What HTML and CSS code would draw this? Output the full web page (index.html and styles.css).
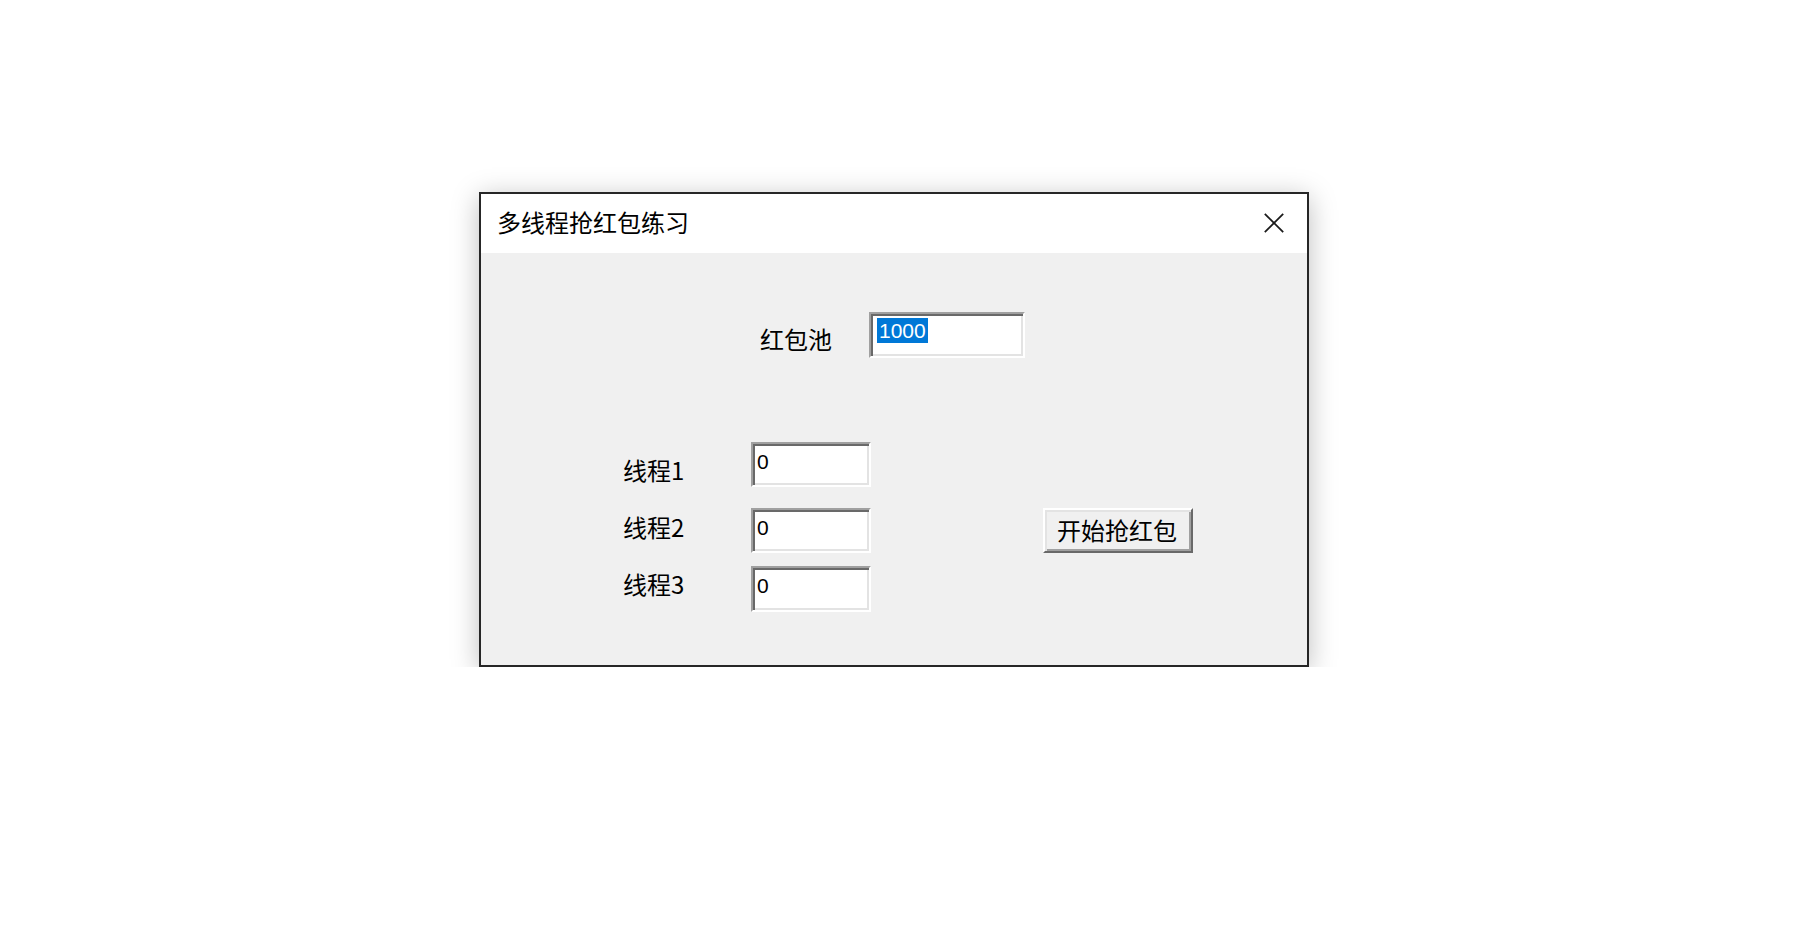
FILE: index.html
```html
<!DOCTYPE html>
<html lang="zh-CN">
<head>
<meta charset="utf-8">
<title>多线程抢红包练习</title>
<link rel="stylesheet" href="styles.css">
</head>
<body>
<div class="window">
  <div class="titlebar">
    <span class="title">多线程抢红包练习</span>
    <svg class="close" width="20" height="20" viewBox="0 0 20 20" aria-hidden="true">
      <line x1="0.8" y1="0.8" x2="19.2" y2="19.2"/>
      <line x1="19.2" y1="0.8" x2="0.8" y2="19.2"/>
    </svg>
  </div>
  <div class="content">
    <div class="pool-row">
      <span class="label pool-label">红包池</span>
      <div class="field pool-field"><span class="sel">1000</span></div>
    </div>
    <div class="threads">
      <div class="thread-col">
        <div class="thread-row">
          <span class="label tl1">线程1</span>
          <div class="field thread-field"><span class="val">0</span></div>
        </div>
        <div class="thread-row r2">
          <span class="label tl2">线程2</span>
          <div class="field thread-field"><span class="val">0</span></div>
        </div>
        <div class="thread-row r3">
          <span class="label tl3">线程3</span>
          <div class="field thread-field tall"><span class="val">0</span></div>
        </div>
      </div>
      <div class="button">开始抢红包</div>
    </div>
  </div>
</div>
</body>
</html>
```

FILE: styles.css
```css
html, body {
  margin: 0;
  background: #ffffff;
}
body {
  padding: 192px 0 0 479px;
  font-family: "Noto Sans CJK SC", "Noto Sans", sans-serif;
  color: #000;
}
.window {
  width: 830px;
  height: 475px;
  box-sizing: border-box;
  border: 2px solid #262626;
  background: #f0f0f0;
  box-shadow: 0 5px 26px rgba(0, 0, 0, 0.26);
  display: flex;
  flex-direction: column;
}
.titlebar {
  height: 59px;
  flex: none;
  background: #ffffff;
  display: flex;
  align-items: center;
  justify-content: space-between;
  padding: 0 23px 0 16px;
}
.title {
  font-size: 24px;
  line-height: 30px;
  margin-bottom: 4px;
  color: #000;
}
.close {
  display: block;
  margin-top: -2px;
}
.close line {
  stroke: #1a1a1a;
  stroke-width: 1.7;
}
.content {
  flex: 1;
  background: #f0f0f0;
  padding-top: 59px;
}
.pool-row {
  display: flex;
  align-items: flex-start;
  padding-left: 279px;
}
.label {
  font-size: 24px;
  line-height: 26px;
  white-space: nowrap;
}
.pool-label {
  width: 109px;
  margin-top: 14px;
}
.field {
  box-sizing: border-box;
  background: #ffffff;
  border: 2px solid;
  border-color: #a0a0a0 #ffffff #ffffff #a0a0a0;
  box-shadow: inset 2px 2px 0 #696969, inset -2px -2px 0 #e3e3e3;
  font-family: "Liberation Sans", Arial, sans-serif;
  font-size: 21px;
  line-height: 25px;
}
.pool-field {
  width: 156px;
  height: 46px;
  padding: 4px 0 0 6px;
}
.sel {
  display: inline-block;
  background: #0078d7;
  color: #ffffff;
  padding: 0 2px;
  line-height: 25px;
}
.threads {
  display: flex;
  align-items: flex-start;
  margin-top: 84px;
}
.thread-col {
  padding-left: 142px;
  display: flex;
  flex-direction: column;
}
.thread-row {
  display: flex;
  align-items: flex-start;
}
.thread-row.r2 { margin-top: 21px; }
.thread-row.r3 { margin-top: 13px; }
.thread-row .label { width: 128px; }
.tl1 { margin-top: 15px; }
.tl2 { margin-top: 6px; }
.tl3 { margin-top: 5px; }
.thread-field {
  width: 120px;
  height: 45px;
  padding: 5px 0 0 4px;
}
.thread-field.tall { height: 46px; }
.val {
  display: inline-block;
  color: #000;
}
.button {
  margin-left: 172px;
  margin-top: 66px;
  width: 150px;
  height: 45px;
  box-sizing: border-box;
  background: #f0f0f0;
  border: 2px solid;
  border-color: #ffffff #696969 #696969 #ffffff;
  box-shadow: inset 2px 2px 0 #e3e3e3, inset -2px -2px 0 #a0a0a0;
  display: flex;
  align-items: center;
  justify-content: center;
  font-size: 24px;
  line-height: 26px;
  padding: 0 2px 2px 0;
}
```
